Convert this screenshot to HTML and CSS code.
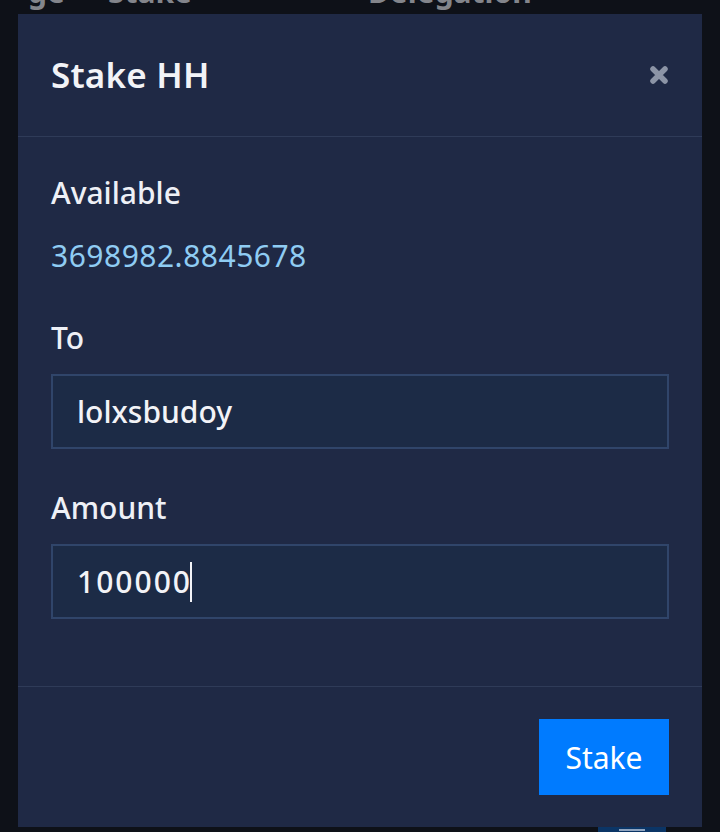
FILE: index.html
```html
<!DOCTYPE html>
<html lang="en">
<head>
<meta charset="utf-8">
<title>Stake HH</title>
<link rel="stylesheet" href="styles.css">
</head>
<body>
<div class="page">
  <div class="table-head">
    <span class="th th-pct">ge</span>
    <span class="th th-stake">Stake</span>
    <span class="th th-del">Delegation</span>
  </div>
  <div class="page-foot">
    <span class="bg-btn"><span class="bg-btn-bar"></span></span>
  </div>
</div>

<div class="modal">
  <div class="modal-header">
    <h2 class="modal-title">Stake HH</h2>
    <button class="close" aria-label="Close">
      <svg width="20" height="20" viewBox="0 0 20 20">
        <path d="M4 4 L16 16 M16 4 L4 16" stroke="#8c94a6" stroke-width="5.5" stroke-linecap="round" fill="none"/>
      </svg>
    </button>
  </div>
  <div class="modal-body">
    <div class="group">
      <div class="label">Available</div>
      <div class="value">3698982.8845678</div>
    </div>
    <div class="group">
      <div class="label">To</div>
      <div class="field">lolxsbudoy</div>
    </div>
    <div class="group">
      <div class="label">Amount</div>
      <div class="field field-num">100000<span class="caret"></span></div>
    </div>
  </div>
  <div class="modal-footer">
    <button class="btn-primary">Stake</button>
  </div>
</div>
</body>
</html>
```

FILE: styles.css
```css
* { box-sizing: border-box; }
html, body {
  margin: 0;
  padding: 0;
  height: 100%;
}
body {
  background: #0e1118;
  font-family: "Noto Sans", "Open Sans", sans-serif;
  overflow: hidden;
}
.page {
  height: 832px;
  display: flex;
  flex-direction: column;
}
.table-head {
  display: flex;
  margin-top: -23px;
  height: 30px;
  line-height: 30px;
  font-size: 30px;
  font-weight: 700;
  color: #83858b;
}
.th-pct { margin-left: 28px; }
.th-stake { margin-left: 43px; }
.th-del { margin-left: 176px; }
.page-foot {
  margin-top: auto;
  display: flex;
  justify-content: flex-end;
  padding-right: 54px;
  height: 6px;
}
.bg-btn {
  width: 68px;
  height: 30px;
  background: #0b3566;
  display: flex;
  justify-content: center;
  padding-top: 3px;
}
.bg-btn-bar {
  width: 26px;
  height: 2px;
  background: #8fa4c0;
}
.modal {
  position: fixed;
  top: 14px;
  left: 18px;
  width: 684px;
  height: 813px;
  background: #1f2945;
  display: flex;
  flex-direction: column;
  color: #eef0f6;
}
.modal-header {
  display: flex;
  align-items: center;
  justify-content: space-between;
  padding: 35px 33px 36px 33px;
  border-bottom: 1px solid #2f3b58;
}
.modal-title {
  margin: 0;
  font-size: 35px;
  line-height: 51px;
  font-weight: 600;
  letter-spacing: 0.2px;
  color: #f2f3f7;
}
.close {
  background: none;
  border: 0;
  padding: 0;
  width: 20px;
  height: 20px;
  display: flex;
  cursor: pointer;
}
.modal-body {
  flex: 1;
  padding: 33px 33px 0 33px;
}
.group { margin-bottom: 36px; }
.group:first-child { margin-bottom: 37px; }
.label {
  font-size: 30px;
  line-height: 45px;
  font-weight: 500;
  margin-bottom: 14px;
  color: #eef0f6;
}
.group:first-child .label { margin-bottom: 18px; }
.value {
  font-size: 30px;
  line-height: 45px;
  letter-spacing: 0.5px;
  color: #8fccf3;
}
.field {
  height: 75px;
  border: 2px solid #30456a;
  background: #1c2b46;
  padding: 0 24px;
  display: flex;
  align-items: center;
  font-size: 30px;
  font-weight: 500;
  color: #f2f3f7;
}
.field-num { letter-spacing: 2px; }
.caret {
  display: inline-block;
  width: 2px;
  height: 40px;
  background: #f2f3f7;
  margin-left: -2px;
}
.modal-footer {
  border-top: 1px solid #2f3b58;
  padding: 32px 33px 32px 33px;
  display: flex;
  justify-content: flex-end;
}
.btn-primary {
  height: 76px;
  width: 130px;
  background: #007bff;
  border: 0;
  color: #ffffff;
  font-family: "Noto Sans", "Open Sans", sans-serif;
  font-size: 30px;
  padding: 0;
  cursor: pointer;
}
```
